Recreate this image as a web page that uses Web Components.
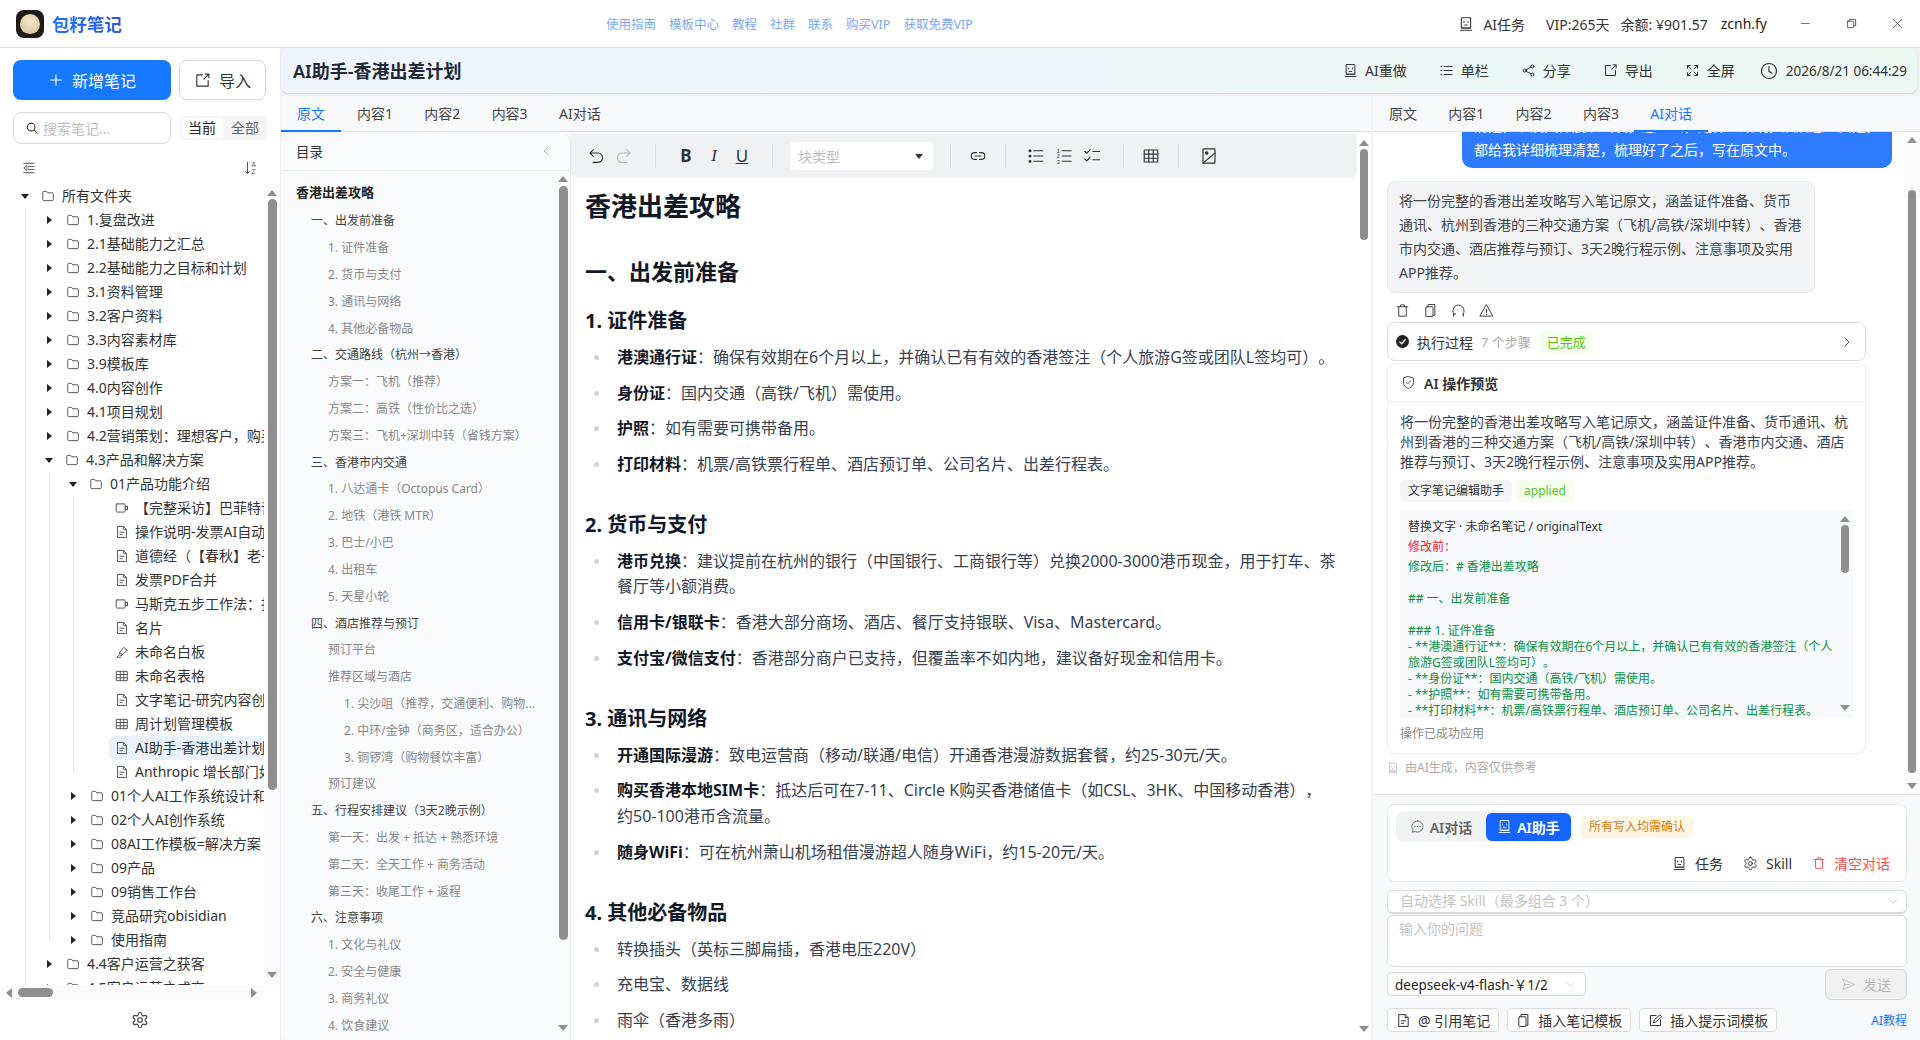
<!DOCTYPE html>
<html lang="zh-CN">
<head>
<meta charset="utf-8">
<title>包籽笔记</title>
<style>
  html, body { margin: 0; height: 100%; overflow: hidden; }
  body {
    font-family: "Noto Sans", "Noto Sans CJK SC", sans-serif;
    font-size: 14px;
    color: #1f2937;
    background: #f0f2f5;
    text-spacing-trim: space-all;
    text-autospace: no-autospace;
  }
</style>
</head>
<body>
<app-shell></app-shell>
<script>
const ICONS = {
  plus: '<path d="M12 4v16M4 12h16"/>',
  box: '<path d="M12 4H4v16h16v-8M14 10l7-7M16 3h5v5"/>',
  search: '<circle cx="10.5" cy="10.5" r="6.5"/><path d="M15.5 15.5L21 21"/>',
  outdent: '<path d="M3 4h18M11 9.5h10M11 14.5h10M3 20h18M8 8l-5 4 5 4z"/>',
  folder: '<path d="M3 5.5A1.5 1.5 0 0 1 4.5 4h5l2 2.5h8A1.5 1.5 0 0 1 21 8v10.5a1.5 1.5 0 0 1-1.5 1.5h-15A1.5 1.5 0 0 1 3 18.5z"/>',
  video: '<rect x="2" y="5" width="15.5" height="14" rx="1.5"/><path d="M17.5 10.5l4-2v7l-4-2"/>',
  doc: '<path d="M5 2.5h9.5l5 5v14H5zM14.5 2.5v5h5M8.5 12.5h7M8.5 16.5h4"/>',
  pen: '<path d="M8 13l7-9 6 5-8 7zM8 13l-1 3 3 3 3-3M6 18l-3 3h7"/>',
  table: '<rect x="3" y="4" width="18" height="16"/><path d="M3 9.5h18M3 15h18M9 4v16M15 4v16"/>',
  gear: '<path d="M12.22 2h-.44a2 2 0 0 0-2 2v.18a2 2 0 0 1-1 1.73l-.43.25a2 2 0 0 1-2 0l-.15-.08a2 2 0 0 0-2.73.73l-.22.38a2 2 0 0 0 .73 2.73l.15.1a2 2 0 0 1 1 1.72v.51a2 2 0 0 1-1 1.74l-.15.09a2 2 0 0 0-.73 2.73l.22.38a2 2 0 0 0 2.73.73l.15-.08a2 2 0 0 1 2 0l.43.25a2 2 0 0 1 1 1.73V20a2 2 0 0 0 2 2h.44a2 2 0 0 0 2-2v-.18a2 2 0 0 1 1-1.73l.43-.25a2 2 0 0 1 2 0l.15.08a2 2 0 0 0 2.73-.73l.22-.39a2 2 0 0 0-.73-2.73l-.15-.08a2 2 0 0 1-1-1.74v-.5a2 2 0 0 1 1-1.74l.15-.09a2 2 0 0 0 .73-2.73l-.22-.38a2 2 0 0 0-2.73-.73l-.15.08a2 2 0 0 1-2 0l-.43-.25a2 2 0 0 1-1-1.73V4a2 2 0 0 0-2-2z"/><circle cx="12" cy="12" r="3"/>',
  robot: '<rect x="5" y="2.5" width="14" height="15.5" rx="1"/><path d="M9 8v1.5M15 8v1.5M10 13.5h4M3.5 21.5h17" /><path d="M5 18h14" />',
  list: '<path d="M8 5.5h13M8 12h13M8 18.5h13M3 5.5h1.5M3 12h1.5M3 18.5h1.5"/>',
  share: '<circle cx="6" cy="12" r="2.5"/><circle cx="18" cy="5.5" r="2.5"/><circle cx="18" cy="18.5" r="2.5"/><path d="M8.2 10.8l7.6-4.2M8.2 13.2l7.6 4.2"/>',
  full: '<path d="M4 4l5.5 5.5M4 8.5V4h4.5M20 4l-5.5 5.5M20 8.5V4h-4.5M4 20l5.5-5.5M4 15.5V20h4.5M20 20l-5.5-5.5M20 15.5V20h-4.5"/>',
  clock: '<circle cx="12" cy="12" r="10"/><path d="M12 6v6.5l4 2.5"/>',
  undo: '<path d="M8.5 3.5L4 8l4.5 4.5M4 8h10.5a5.5 5.5 0 0 1 0 12.5H8"/>',
  redo: '<path d="M15.5 3.5L20 8l-4.5 4.5M20 8H9.5a5.5 5.5 0 0 0 0 12.5H16"/>',
  link: '<path d="M10 7.5H7.5a4.5 4.5 0 0 0 0 9H10M14 7.5h2.5a4.5 4.5 0 0 1 0 9H14M8 12h8"/>',
  ul: '<path d="M9 5h12M9 12h12M9 19h12"/><circle cx="4" cy="5" r="1.3" fill="currentColor"/><circle cx="4" cy="12" r="1.3" fill="currentColor"/><circle cx="4" cy="19" r="1.3" fill="currentColor"/>',
  ol: '<path d="M9.5 5h12M9.5 12h12M9.5 19h12"/><g fill="currentColor" stroke="none" font-size="8" font-family="Liberation Sans"><text x="2" y="8">1</text><text x="2" y="15">2</text><text x="2" y="22">3</text></g>',
  task: '<path d="M2.5 6l2.5 2.5L9.5 3.5M2.5 16l2.5 2.5 4.5-5M13 6h9M13 17h9"/>',
  image: '<rect x="4" y="2.5" width="16" height="19" rx="1"/><path d="M4 21.5L20 8"/><circle cx="9" cy="8" r="1.6" fill="currentColor"/>',
  chat: '<path d="M12 3a9 9 0 1 1-4.2 17L3.5 21l1.2-4A9 9 0 0 1 12 3z"/><path d="M8 12h.01M12 12h.01M16 12h.01" stroke-width="2.4"/>',
  shield: '<path d="M12 2.5l8 2.5v7c0 5-3.5 8-8 9.5-4.5-1.5-8-4.5-8-9.5V5z"/><path d="M8.5 11.5l2.5 2.5 4.5-5"/>',
  trash: '<path d="M3.5 6h17M9 6V3h6v3M6 6v15h12V6"/>',
  copy: '<path d="M8 6V2.5h11v17h-3"/><rect x="4.5" y="6" width="11.5" height="15.5" rx="1"/>',
  refresh: '<path d="M5 18A9 9 0 1 1 19 18M4 21v-3.5h3.5M20 21v-3.5"/>',
  warn: '<path d="M12 3l10 18H2z"/><path d="M12 10v5M12 17.5v1"/>',
  send: '<path d="M3 3.5l18.5 8.5L3 20.5 6 12zM6 12h8"/>',
  edit: '<path d="M13 4H4v16h16v-9M9 15l1-4 9-8 3 3-9 8z"/>',
  chevron: '<path d="M5 9l7 7 7-7"/>',
  right: '<path d="M8 4l8 8-8 8"/>',
  left: '<path d="M16 4l-8 8 8 8"/>',
  min: '<path d="M3 12h18"/>',
  restore: '<rect x="3" y="7" width="14" height="14" rx="1"/><path d="M7 7V3h14v14h-4"/>',
  close: '<path d="M3 3l18 18M21 3L3 21"/>'
};

class UiIcon extends HTMLElement {
  connectedCallback() {
    const size = this.getAttribute('size') || 14;
    const stroke = this.getAttribute('stroke') || 1.6;
    this.attachShadow({ mode: 'open' }).innerHTML = `
      <style>
        :host { display: inline-flex; flex: none; width: ${size}px; height: ${size}px; }
        svg { width: 100%; height: 100%; display: block; }
      </style>
      <svg viewBox="0 0 24 24" fill="none" stroke="currentColor" stroke-width="${stroke}"
           stroke-linecap="round" stroke-linejoin="round">${ICONS[this.getAttribute('name')] || ''}</svg>`;
  }
}

// scrollbars are drawn, the panes never really scroll in this shot
class ScrollBar extends HTMLElement {
  connectedCallback() {
    const a = (n, d) => Number(this.getAttribute(n) ?? d);
    const horizontal = this.hasAttribute('horizontal');
    const w = a('size', 16), tw = a('thumb', 9);
    const start = a('start', 0), len = a('len', 40), up = a('arrow', 10);
    this.attachShadow({ mode: 'open' }).innerHTML = `
      <style>
        :host { display: flex; flex: none; box-sizing: border-box;
          flex-direction: ${horizontal ? 'row' : 'column'}; align-items: center;
          ${horizontal ? `height:${w}px;` : `width:${w}px;`} background: ${this.getAttribute('track') || 'transparent'}; }
        .thumb { flex: none; background: #8f8f8f; border-radius: 5px;
          ${horizontal ? `height:${tw}px;width:${len}px;margin-left:${start}px;` : `width:${tw}px;height:${len}px;margin-top:${start}px;`} }
        .a { flex: none; width: 0; height: 0; }
        .up { margin-top: ${up}px; border: 5.5px solid transparent; border-top: 0; border-bottom: 6px solid #8f8f8f; }
        .down { margin-top: auto; margin-bottom: ${a('arrow-end', up)}px; border: 5.5px solid transparent; border-bottom: 0; border-top: 6px solid #8f8f8f; }
        .lf { margin-left: ${up}px; border: 5px solid transparent; border-left: 0; border-right: 6px solid #8f8f8f; }
        .rg { margin-left: auto; margin-right: ${a('arrow-end', up)}px; border: 5px solid transparent; border-right: 0; border-left: 6px solid #8f8f8f; }
      </style>
      <div class="a ${horizontal ? 'lf' : 'up'}"></div><div class="thumb"></div><div class="a ${horizontal ? 'rg' : 'down'}"></div>`;
  }
}

class TopBar extends HTMLElement {
  connectedCallback() {
    const links = ['使用指南', '模板中心', '教程', '社群', '联系', '购买VIP', '获取免费VIP'];
    this.attachShadow({ mode: 'open' }).innerHTML = `
      <style>
        :host { display: flex; align-items: center; height: 47px; background: #fff; border-bottom: 1px solid #dcdee3; font-size: 14px; color: #333; }
        .brand { width: 606px; flex: none; box-sizing: border-box; padding-left: 16px; display: flex; align-items: center; gap: 8px; }
        .logo { width: 28px; height: 28px; border-radius: 8px; background: #1e1c1a; display: flex; align-items: center; justify-content: center; }
        .bun { width: 20px; height: 20px; border-radius: 50% 50% 48% 48%; background: radial-gradient(circle at 50% 40%, #f4e6cc, #d4bd97); }
        .name { font-size: 17.5px; line-height: 24px; font-weight: 700; background: linear-gradient(90deg, #1677ff, #2f54eb); -webkit-background-clip: text; background-clip: text; color: transparent; }
        nav { display: flex; gap: 13px; font-size: 12.5px; color: #7ba7f7; }
        .right { margin-left: auto; display: flex; align-items: center; }
        .task { display: flex; align-items: center; gap: 9px; margin-right: 21px; }
        .vip { margin-right: 11px; }
        .money { margin-right: 13px; }
        .user { margin-right: 15px; color: #222; }
        .win { width: 46px; height: 46px; display: flex; align-items: center; justify-content: center; color: #444; }
      </style>
      <div class="brand"><div class="logo"><div class="bun"></div></div><span class="name">包籽笔记</span></div>
      <nav>${links.map(l => `<span>${l}</span>`).join('')}</nav>
      <div class="right">
        <span class="task"><ui-icon name="robot" size="16"></ui-icon>AI任务</span>
        <span class="vip">VIP:265天</span>
        <span class="money">余额: ¥901.57</span>
        <span class="user">zcnh.fy</span>
        <span class="win"><ui-icon name="min" size="11" stroke="1.6"></ui-icon></span>
        <span class="win"><ui-icon name="restore" size="11" stroke="1.8"></ui-icon></span>
        <span class="win"><ui-icon name="close" size="11" stroke="1.6"></ui-icon></span>
      </div>`;
  }
}

function leaf(type, text, active) { return { type, text, active }; }
function dir(text, children) { return { type: 'folder', text, children }; }

const TREE = [
  dir('所有文件夹', [
    dir('1.复盘改进'), dir('2.1基础能力之汇总'), dir('2.2基础能力之目标和计划'), dir('3.1资料管理'),
    dir('3.2客户资料'), dir('3.3内容素材库'), dir('3.9模板库'), dir('4.0内容创作'), dir('4.1项目规划'),
    dir('4.2营销策划：理想客户，购买旅程'),
    dir('4.3产品和解决方案', [
      dir('01产品功能介绍', [
        leaf('video', '【完整采访】巴菲特谈投资'), leaf('doc', '操作说明-发票AI自动化'),
        leaf('doc', '道德经（【春秋】老子）'), leaf('doc', '发票PDF合并'),
        leaf('video', '马斯克五步工作法：打破'), leaf('doc', '名片'), leaf('pen', '未命名白板'),
        leaf('table', '未命名表格'), leaf('doc', '文字笔记-研究内容创作'), leaf('table', '周计划管理模板'),
        leaf('doc', 'AI助手-香港出差计划', true), leaf('doc', 'Anthropic 增长部门如何')
      ]),
      dir('01个人AI工作系统设计和实现'), dir('02个人AI创作系统'), dir('08AI工作模板=解决方案'),
      dir('09产品'), dir('09销售工作台'), dir('竞品研究obisidian'), dir('使用指南')
    ]),
    dir('4.4客户运营之获客'), dir('4.5客户运营之成交')
  ])
];

class FileTree extends HTMLElement {
  renderNode(n) {
    if (n.type !== 'folder') {
      return `<div class="row file${n.active ? ' active' : ''}"><div class="in">
        <ui-icon name="${n.type}" size="14" stroke="1.5"></ui-icon><span class="t">${n.text}</span></div></div>`;
    }
    const open = !!n.children;
    return `<div class="row">
        <i class="${open ? 'cd' : 'cr'}"></i>
        <ui-icon class="fi" name="folder" size="14" stroke="1.5"></ui-icon><span class="t">${n.text}</span>
      </div>
      ${open ? `<div class="kids">${n.children.map(c => this.renderNode(c)).join('')}</div>` : ''}`;
  }
  connectedCallback() {
    this.attachShadow({ mode: 'open' }).innerHTML = `
      <style>
        :host { display: block; flex: 1; min-width: 0; overflow: hidden; color: #333; }
        .row { display: flex; align-items: center; height: 24px; padding-left: 19px; white-space: nowrap; line-height: 24px; }
        .cr, .cd { flex: none; display: block; box-sizing: content-box; width: 0; height: 0; }
        .cr { margin: 0 8.5px 0 3.5px; border: 4.5px solid transparent; border-right: 0; border-left: 5px solid #222; }
        .cd { margin: 0 6.5px 0 1.5px; border: 4.5px solid transparent; border-bottom: 0; border-top: 5px solid #222; }
        .fi { margin-left: 6px; color: #444; }
        .t { margin-left: 7px; }
        .kids { margin-left: 24px; background: linear-gradient(#e3e5e8, #e3e5e8) 1px 0 / 1px calc(100% - 12px) no-repeat; }
        .file { padding-left: 37px; }
        .in { display: flex; align-items: center; flex: 1; height: 24px; padding-left: 6px; border-radius: 6px 0 0 6px; color: #444; }
        .in .t { margin-left: 6px; color: #333; }
        .active .in { background: #e8f3ff; }
      </style>
      ${TREE.map(n => this.renderNode(n)).join('')}`;
  }
}

class NoteSidebar extends HTMLElement {
  connectedCallback() {
    this.attachShadow({ mode: 'open' }).innerHTML = `
      <style>
        :host { display: flex; flex-direction: column; flex: none; width: 280px; background: #fff; box-sizing: border-box; padding-top: 12px; height: 100%; margin-right: 1px; }
        .actions { display: flex; gap: 8px; padding-left: 13px; }
        .new { width: 158px; height: 40px; border-radius: 8px; background: #1677ff; color: #fff; font-size: 16px; display: flex; align-items: center; justify-content: center; gap: 8px; }
        .imp { width: 87px; height: 40px; box-sizing: border-box; border: 1px solid #d9d9d9; border-radius: 8px; font-size: 16px; color: #333; display: flex; align-items: center; justify-content: center; gap: 8px; }
        .filter { display: flex; align-items: center; gap: 9px; padding: 12px 0 0 13px; }
        .search { width: 158px; height: 32px; box-sizing: border-box; border: 1px solid #d9d9d9; border-radius: 8px; display: flex; align-items: center; gap: 4px; padding-left: 11px; color: #bfbfbf; font-size: 14px; }
        .search ui-icon { color: #333; }
        .seg { display: flex; height: 24px; background: #f5f5f5; border-radius: 4px; width: 87px; box-sizing: border-box; font-size: 14px; line-height: 24px; color: #666; }
        .seg span { flex: 1; text-align: center; }
        .seg .on { background: #fff; color: #222; border-radius: 3px; margin: 2px 0 2px 1px; line-height: 20px; flex: 0 0 42px; }
        .tools { height: 40px; display: flex; align-items: flex-end; justify-content: space-between; box-sizing: border-box; padding: 0 22px 9px 22px; color: #555; }
        .body { flex: 1; min-height: 0; display: flex; }
        .hbar { width: 264px; }
        .foot { height: 40px; display: flex; align-items: center; justify-content: center; color: #444; }
      </style>
      <div class="actions">
        <div class="new"><ui-icon name="plus" size="16" stroke="1.6"></ui-icon>新增笔记</div>
        <div class="imp"><ui-icon name="box" size="17"></ui-icon>导入</div>
      </div>
      <div class="filter">
        <div class="search"><ui-icon name="search" size="14" stroke="1.8"></ui-icon>搜索笔记...</div>
        <div class="seg"><span class="on">当前</span><span>全部</span></div>
      </div>
      <div class="tools">
        <ui-icon name="outdent" size="14"></ui-icon>
        <svg width="14" height="14" viewBox="0 0 14 14" fill="none" stroke="currentColor"><path d="M3.5 1v11.5M1.5 10.5l2 2 2-2"/><text x="7.5" y="6" font-size="6.5" fill="currentColor" stroke="none" font-family="Liberation Sans">A</text><text x="7.5" y="13" font-size="6.5" fill="currentColor" stroke="none" font-family="Liberation Sans">Z</text></svg>
      </div>
      <div class="body">
        <file-tree></file-tree>
        <scroll-bar size="16" thumb="9" arrow="6" start="3" len="591" arrow-end="7" track="#fbfbfb"></scroll-bar>
      </div>
      <scroll-bar class="hbar" horizontal size="15" thumb="9" arrow="6" start="6" len="35" arrow-end="7" track="#fbfbfb"></scroll-bar>
      <div class="foot"><ui-icon name="gear" size="18" stroke="1.6"></ui-icon></div>`;
  }
}

class TitleStrip extends HTMLElement {
  connectedCallback() {
    const btn = (icon, text) => `<span class="b"><ui-icon name="${icon}" size="15"></ui-icon>${text}</span>`;
    this.attachShadow({ mode: 'open' }).innerHTML = `
      <style>
        :host { display: flex; align-items: center; height: 45px; margin: 0 3px 3px 0; box-sizing: border-box; padding: 0 10px 0 12px; border-radius: 8px;
          background: linear-gradient(90deg, #eef5ff, #ecf9f3); box-shadow: 0 1px 2px rgba(0,0,0,.12); color: #333; }
        h1 { margin: 0; font-size: 18px; line-height: 28px; font-weight: 600; color: #1f2937; }
        .right { margin-left: auto; display: flex; align-items: center; gap: 32px; }
        .b { display: flex; align-items: center; gap: 7px; line-height: 20px; }
        .time { margin-left: -7px; gap: 8px; font-size: 13.5px; }
      </style>
      <h1>AI助手-香港出差计划</h1>
      <div class="right">
        ${btn('robot', 'AI重做')}${btn('list', '单栏')}${btn('share', '分享')}${btn('box', '导出')}${btn('full', '全屏')}
        <span class="b time"><ui-icon name="clock" size="18" stroke="1.6"></ui-icon>2026/8/21 06:44:29</span>
      </div>`;
  }
}

class TabStrip extends HTMLElement {
  connectedCallback() {
    const active = Number(this.getAttribute('active'));
    const tabs = ['原文', '内容1', '内容2', '内容3', 'AI对话'];
    this.attachShadow({ mode: 'open' }).innerHTML = `
      <style>
        :host { display: flex; height: 36px; box-sizing: border-box; flex: none; background: #f8f9fb; border-bottom: 1px solid #dfe2e7; color: #444; }
        span { padding: 0 15.3px 0 16px; line-height: 35px; height: 36px; box-sizing: border-box; }
        span:first-child { padding: 0 17px; }
        .on, span.on:first-child { color: #1677ff; border-bottom: 2px solid #1677ff; padding: 0 16px; }
      </style>
      ${tabs.map((t, i) => `<span class="${i === active ? 'on' : ''}">${t}</span>`).join('')}`;
  }
}

const TOC = [
  [0, '香港出差攻略'], [1, '一、出发前准备'], [2, '1. 证件准备'], [2, '2. 货币与支付'], [2, '3. 通讯与网络'], [2, '4. 其他必备物品'],
  [1, '二、交通路线（杭州→香港）'], [2, '方案一：飞机（推荐）'], [2, '方案二：高铁（性价比之选）'], [2, '方案三：飞机+深圳中转（省钱方案）'],
  [1, '三、香港市内交通'], [2, '1. 八达通卡（Octopus Card）'], [2, '2. 地铁（港铁 MTR）'], [2, '3. 巴士/小巴'], [2, '4. 出租车'], [2, '5. 天星小轮'],
  [1, '四、酒店推荐与预订'], [2, '预订平台'], [2, '推荐区域与酒店'], [3, '1. 尖沙咀（推荐，交通便利、购物...'], [3, '2. 中环/金钟（商务区，适合办公）'], [3, '3. 铜锣湾（购物餐饮丰富）'], [2, '预订建议'],
  [1, '五、行程安排建议（3天2晚示例）'], [2, '第一天：出发 + 抵达 + 熟悉环境'], [2, '第二天：全天工作 + 商务活动'], [2, '第三天：收尾工作 + 返程'],
  [1, '六、注意事项'], [2, '1. 文化与礼仪'], [2, '2. 安全与健康'], [2, '3. 商务礼仪'], [2, '4. 饮食建议']
];

class TocPanel extends HTMLElement {
  connectedCallback() {
    this.attachShadow({ mode: 'open' }).innerHTML = `
      <style>
        :host { display: flex; flex-direction: column; flex: none; width: 289px; margin-left: 1px; background: #fafbfd; border-radius: 8px 8px 0 8px; height: 100%; box-sizing: border-box; border-right: 1px solid #e8e9ec; }
        header { flex: none; height: 37px; box-sizing: border-box; display: flex; align-items: center; justify-content: space-between; padding: 0 18px 2px 14px; border-bottom: 1px solid #eceef1; color: #333; font-size: 13.5px; }
        header ui-icon { color: #999; }
        .body { flex: 1; min-height: 0; display: flex; }
        .list { flex: 1; min-width: 0; overflow: hidden; padding-top: 8px; }
        .i { height: 26.82px; line-height: 26.82px; white-space: nowrap; font-size: 12px; }
        .l0 { padding-left: 14px; font-size: 13px; font-weight: 700; color: #222; margin-bottom: 2.5px; }
        .l1 { padding-left: 29px; color: #444; }
        .l2 { padding-left: 46px; color: #888; }
        .l3 { padding-left: 62px; color: #888; }
      </style>
      <header><span>目录</span><ui-icon name="left" size="12" stroke="1.5"></ui-icon></header>
      <div class="body">
        <div class="list">${TOC.map(([l, t]) => `<div class="i l${l}">${t}</div>`).join('')}</div>
        <scroll-bar size="14" thumb="9" arrow="5" start="4" len="754" arrow-end="9"></scroll-bar>
      </div>`;
  }
}

class NoteEditor extends HTMLElement {
  connectedCallback() {
    const tool = (n) => `<span class="t"><ui-icon name="${n}" size="18" stroke="1.5"></ui-icon></span>`;
    this.attachShadow({ mode: 'open' }).innerHTML = `
      <style>
        :host { display: flex; flex: 1; min-width: 0; height: 100%; background: #fff; }
        .col { flex: 1; min-width: 0; display: flex; flex-direction: column; }
        .bar { flex: none; height: 44px; display: flex; align-items: center; padding-left: 11px; background: #f0f1f3; border-radius: 0 0 8px 8px; color: #333; }
        .t { flex: none; width: 28px; display: flex; justify-content: center; align-items: center; font-size: 17px; line-height: 20px; }
        .off { color: #bbb; }
        .s { flex: none; width: 1px; height: 24px; background: #dcdde0; }
        .sel { flex: none; width: 143px; height: 28px; box-sizing: border-box; background: #fff; border-radius: 4px; display: flex; align-items: center; justify-content: space-between; padding: 0 10px 0 8px; color: #bfbfbf; font-size: 14px; }
        .caret { border: 4.5px solid transparent; border-bottom: 0; border-top: 5px solid #333; }
        .doc { flex: 1; overflow: hidden; padding: 0 0 0 14px; color: #374151; font-size: 16px; line-height: 25.6px; }
        h1, h2, h3 { color: #111827; font-weight: 700; margin: 0; }
        h1 { font-size: 26px; line-height: 36px; margin-top: 10px; }
        h2 { font-size: 22px; line-height: 30px; margin-top: 31.5px; }
        h3 { font-size: 20px; line-height: 28px; margin-top: 33.5px; }
        h2 + h3 { margin-top: 21.5px; }
        ul { list-style: none; margin: 0; padding: 0 0 0 32px; }
        li { margin-top: 10px; position: relative; white-space: nowrap; }
        li.wrap { margin-bottom: 1.5px; }
        li::before { content: ""; position: absolute; left: -23px; top: 10px; width: 5px; height: 5px; border-radius: 50%; background: #cfd3d9; }
        b { color: #111827; font-weight: 700; }
      </style>
      <div class="col">
        <div class="bar">
          ${tool('undo')}<span class="t off"><ui-icon name="redo" size="18" stroke="1.5"></ui-icon></span>
          <span class="s" style="margin:0 16px 0 17px"></span>
          <span class="t" style="font-weight:700">B</span><span class="t" style="font-style:italic;font-family:'Liberation Serif',serif">I</span><span class="t" style="text-decoration:underline">U</span>
          <span class="s" style="margin:0 17px 0 16px"></span>
          <div class="sel"><span>块类型</span><i class="caret"></i></div>
          <span class="s" style="margin:0 13px 0 17px"></span>
          ${tool('link')}
          <span class="s" style="margin:0 16px 0 13px"></span>
          ${tool('ul')}${tool('ol')}${tool('task')}
          <span class="s" style="margin:0 13px 0 17px"></span>
          ${tool('table')}
          <span class="s" style="margin:0 16px 0 13px"></span>
          ${tool('image')}
        </div>
        <div class="doc">
          <h1>香港出差攻略</h1>
          <h2>一、出发前准备</h2>
          <h3>1. 证件准备</h3>
          <ul>
            <li><b>港澳通行证</b>：确保有效期在6个月以上，并确认已有有效的香港签注（个人旅游G签或团队L签均可）。</li>
            <li><b>身份证</b>：国内交通（高铁/飞机）需使用。</li>
            <li><b>护照</b>：如有需要可携带备用。</li>
            <li><b>打印材料</b>：机票/高铁票行程单、酒店预订单、公司名片、出差行程表。</li>
          </ul>
          <h3>2. 货币与支付</h3>
          <ul>
            <li class="wrap"><b>港币兑换</b>：建议提前在杭州的银行（中国银行、工商银行等）兑换2000-3000港币现金，用于打车、茶<br>餐厅等小额消费。</li>
            <li><b>信用卡/银联卡</b>：香港大部分商场、酒店、餐厅支持银联、Visa、Mastercard。</li>
            <li><b>支付宝/微信支付</b>：香港部分商户已支持，但覆盖率不如内地，建议备好现金和信用卡。</li>
          </ul>
          <h3>3. 通讯与网络</h3>
          <ul>
            <li><b>开通国际漫游</b>：致电运营商（移动/联通/电信）开通香港漫游数据套餐，约25-30元/天。</li>
            <li class="wrap"><b>购买香港本地SIM卡</b>：抵达后可在7-11、Circle K购买香港储值卡（如CSL、3HK、中国移动香港），<br>约50-100港币含流量。</li>
            <li><b>随身WiFi</b>：可在杭州萧山机场租借漫游超人随身WiFi，约15-20元/天。</li>
          </ul>
          <h3>4. 其他必备物品</h3>
          <ul>
            <li>转换插头（英标三脚扁插，香港电压220V）</li>
            <li>充电宝、数据线</li>
            <li>雨伞（香港多雨）</li>
          </ul>
        </div>
      </div>
      <scroll-bar size="14" thumb="8" arrow="6" start="3" len="91" arrow-end="8"></scroll-bar>`;
  }
}

class NotePane extends HTMLElement {
  connectedCallback() {
    this.attachShadow({ mode: 'open' }).innerHTML = `
      <style>
        :host { display: flex; flex-direction: column; flex: none; width: 1090px; min-height: 0; background: #f8f9fb; }
        .body { flex: 1; min-height: 0; display: flex; margin-top: 2px; }
      </style>
      <tab-strip active="0"></tab-strip>
      <div class="body"><toc-panel></toc-panel><note-editor></note-editor></div>`;
  }
}

const DIFF_LINES = [
  '', '## 一、出发前准备', '', '### 1. 证件准备',
  '- **港澳通行证**：确保有效期在6个月以上，并确认已有有效的香港签注（个人',
  '旅游G签或团队L签均可）。',
  '- **身份证**：国内交通（高铁/飞机）需使用。',
  '- **护照**：如有需要可携带备用。',
  '- **打印材料**：机票/高铁票行程单、酒店预订单、公司名片、出差行程表。'
];

class ChatThread extends HTMLElement {
  connectedCallback() {
    this.attachShadow({ mode: 'open' }).innerHTML = `
      <style>
        :host { display: flex; flex: 1; min-height: 0; background: #fff; border-bottom: 1px solid #e3e5e8; }
        .col { flex: 1; min-width: 0; overflow: hidden; }
        .me { margin: -24px 0 0 89px; width: 430px; box-sizing: border-box; background: #2f7bff; color: #fff; border-radius: 0 0 10px 10px; padding: 6px 12px; line-height: 24px; white-space: nowrap; overflow: hidden; }
        .ai { margin: 13px 0 0 14px; width: 428px; box-sizing: border-box; background: #f3f4f6; border: 1px solid #e9eaed; border-radius: 8px; padding: 7px 11px; line-height: 24px; color: #444; white-space: nowrap; }
        .acts { height: 29px; margin-left: 22px; display: flex; align-items: center; gap: 13px; color: #444; padding-top: 5px; box-sizing: border-box; }
        .steps { margin-left: 14px; width: 479px; height: 39px; box-sizing: border-box; border: 1px solid #dcdee2; border-radius: 8px; display: flex; align-items: center; padding: 0 12px 0 8px; }
        .ok { width: 13px; height: 13px; border-radius: 50%; background: #222; display: flex; align-items: center; justify-content: center; }
        .steps .n { margin-left: 8px; color: #333; }
        .steps .c { margin-left: 8px; color: #aaa; font-size: 13px; }
        .steps .g { margin-left: 8px; background: #f6ffed; color: #52c41a; font-size: 13px; padding: 0 8px; line-height: 22px; border-radius: 4px; }
        .steps ui-icon.r { margin-left: auto; color: #444; }
        .card { margin: 2px 0 0 14px; width: 479px; height: 391px; box-sizing: border-box; border: 1px solid #eceef1; border-radius: 8px; }
        .hd { height: 38px; box-sizing: border-box; border-bottom: 1px solid #eceef1; display: flex; align-items: center; gap: 8px; padding-left: 13px; font-weight: 600; color: #333; }
        .bd { padding: 10px 12px 0 12px; }
        .desc { line-height: 20px; color: #374151; white-space: nowrap; }
        .tags { display: flex; gap: 4px; margin-top: 8px; font-size: 12px; line-height: 22px; }
        .tags span { padding: 0 8px; background: #f5f5f5; border-radius: 4px; color: #333; }
        .tags .g { background: #f6ffed; color: #52c41a; }
        .diff { margin-top: 8px; height: 208px; display: flex; background: #f7f9fc; border-radius: 4px; font-size: 12px; line-height: 16px; overflow: hidden; }
        .txt { flex: 1; min-width: 0; padding: 9px 0 0 8px; color: #0a8f45; }
        .txt div { min-height: 16px; white-space: pre; }
        .meta { color: #333; margin-bottom: 4px; }
        .del { color: #f5222d; margin-bottom: 4px; }
        .done { margin-top: 8px; font-size: 12px; line-height: 16px; color: #888; }
        .note { margin: 6px 0 0 14px; display: flex; align-items: center; gap: 4px; font-size: 12px; line-height: 16px; color: #aaa; }
      </style>
      <div class="col">
        <div class="me">清楚，以及具体航班出发，怎么去，走什么路线，酒店怎么安定，<br>都给我详细梳理清楚，梳理好了之后，写在原文中。</div>
        <div class="ai">将一份完整的香港出差攻略写入笔记原文，涵盖证件准备、货币<br>通讯、杭州到香港的三种交通方案（飞机/高铁/深圳中转）、香港<br>市内交通、酒店推荐与预订、3天2晚行程示例、注意事项及实用<br>APP推荐。</div>
        <div class="acts"><ui-icon name="trash" size="15"></ui-icon><ui-icon name="copy" size="15"></ui-icon><ui-icon name="refresh" size="15"></ui-icon><ui-icon name="warn" size="15"></ui-icon></div>
        <div class="steps">
          <span class="ok"><svg width="9" height="9" viewBox="0 0 24 24" fill="none" stroke="#fff" stroke-width="3.4"><path d="M4 12l6 6 10-12"/></svg></span>
          <span class="n">执行过程</span><span class="c">7 个步骤</span><span class="g">已完成</span>
          <ui-icon class="r" name="right" size="12" stroke="1.8"></ui-icon>
        </div>
        <div class="card">
          <div class="hd"><ui-icon name="shield" size="15" stroke="1.4"></ui-icon>AI 操作预览</div>
          <div class="bd">
            <div class="desc">将一份完整的香港出差攻略写入笔记原文，涵盖证件准备、货币通讯、杭<br>州到香港的三种交通方案（飞机/高铁/深圳中转）、香港市内交通、酒店<br>推荐与预订、3天2晚行程示例、注意事项及实用APP推荐。</div>
            <div class="tags"><span>文字笔记编辑助手</span><span class="g">applied</span></div>
            <div class="diff">
              <div class="txt">
                <div class="meta">替换文字 · 未命名笔记 / originalText</div>
                <div class="del">修改前：</div>
                <div>修改后：# 香港出差攻略</div>
                ${DIFF_LINES.map(l => `<div>${l}</div>`).join('')}
              </div>
              <scroll-bar size="16" thumb="8" arrow="6" start="3" len="48" arrow-end="7"></scroll-bar>
            </div>
            <div class="done">操作已成功应用</div>
          </div>
        </div>
        <div class="note"><ui-icon name="robot" size="12" stroke="1.2"></ui-icon><span style="margin-left:2px">由AI生成，内容仅供参考</span></div>
      </div>
      <scroll-bar size="16" thumb="8" arrow="5" start="47" len="583" arrow-end="5" track="#fcfcfc"></scroll-bar>`;
  }
}

class ChatComposer extends HTMLElement {
  connectedCallback() {
    this.attachShadow({ mode: 'open' }).innerHTML = `
      <style>
        :host { display: block; flex: none; height: 245px; box-sizing: border-box; background: #f8f9fb; padding: 9px 13px 0 14px; }
        .card { height: 78px; box-sizing: border-box; background: #fff; border: 1px solid #e8eaed; border-radius: 8px; padding: 6px 16px 0 8px; }
        .r1 { display: flex; align-items: center; gap: 8px; height: 31px; }
        .seg { display: flex; height: 31px; width: 177px; box-sizing: border-box; background: #f2f3f5; border-radius: 8px; align-items: center; padding: 0 2px; color: #666; font-weight: 600; font-size: 14px; }
        .seg span { display: flex; align-items: center; justify-content: center; gap: 5px; height: 28px; width: 86px; }
        .seg .on { background: #1664ff; color: #fff; border-radius: 6px; margin-left: auto; width: 85px; }
        .warn { background: #fff7e6; color: #d97706; font-size: 12px; line-height: 22px; padding: 0 8px; border-radius: 4px; }
        .r2 { display: flex; justify-content: flex-end; align-items: center; gap: 20px; height: 20px; margin-top: 11px; color: #333; font-size: 14px; }
        .r2 span { display: flex; align-items: center; gap: 8px; }
        .danger { color: #ff4d4f; }
        .skill { margin-top: 8px; height: 24px; box-sizing: border-box; background: #fff; border: 1px solid #d9dbdf; border-bottom-width: 2px; border-radius: 6px; display: flex; align-items: center; justify-content: space-between; padding: 0 7px 2px 12px; line-height: 18px; color: #c4c4c4; }
        .ask { margin-top: 1px; height: 52px; box-sizing: border-box; background: #fff; border: 1px solid #d9dbdf; border-radius: 6px; padding: 3px 11px; color: #c4c4c4; line-height: 20px; }
        .r3 { display: flex; align-items: center; justify-content: space-between; height: 30px; margin-top: 2px; }
        .model { width: 199px; height: 24px; box-sizing: border-box; background: #fff; border: 1px solid #d9dbdf; border-radius: 4px; display: flex; align-items: center; justify-content: space-between; padding: 0 9px 0 7px; color: #222; font-size: 13.5px; }
        .model ui-icon, .skill ui-icon { color: #bbb; }
        .send { width: 82px; height: 31px; box-sizing: border-box; background: #f0f0f0; border: 1px solid #d9d9d9; border-radius: 6px; display: flex; align-items: center; justify-content: center; gap: 7px; color: #bbb; }
        .r4 { display: flex; align-items: center; gap: 8px; margin-top: 9px; }
        .b { display: flex; align-items: center; gap: 7px; height: 24px; box-sizing: border-box; padding: 0 8px; background: #fff; border: 1px solid #d9dbdf; border-radius: 4px; color: #333; white-space: nowrap; }
        .help { margin-left: auto; color: #1677ff; font-size: 12px; }
      </style>
      <div class="card">
        <div class="r1">
          <div class="seg"><span><ui-icon name="chat" size="15" stroke="1.4"></ui-icon>AI对话</span><span class="on"><ui-icon name="robot" size="15" stroke="1.5"></ui-icon>AI助手</span></div>
          <span class="warn">所有写入均需确认</span>
        </div>
        <div class="r2">
          <span><ui-icon name="robot" size="15"></ui-icon>任务</span>
          <span><ui-icon name="gear" size="15" stroke="1.6"></ui-icon>Skill</span>
          <span class="danger"><ui-icon name="trash" size="14"></ui-icon>清空对话</span>
        </div>
      </div>
      <div class="skill"><span>自动选择 Skill（最多组合 3 个）</span><ui-icon name="chevron" size="12" stroke="1.2"></ui-icon></div>
      <div class="ask">输入你的问题</div>
      <div class="r3">
        <div class="model"><span>deepseek-v4-flash-￥1/2</span><ui-icon name="chevron" size="11" stroke="1.2"></ui-icon></div>
        <div class="send"><ui-icon name="send" size="15" stroke="1.3"></ui-icon>发送</div>
      </div>
      <div class="r4">
        <span class="b"><ui-icon name="doc" size="15"></ui-icon>@ 引用笔记</span>
        <span class="b"><ui-icon name="copy" size="15"></ui-icon>插入笔记模板</span>
        <span class="b"><ui-icon name="edit" size="15"></ui-icon>插入提示词模板</span>
        <span class="help">AI教程</span>
      </div>`;
  }
}

class ChatPane extends HTMLElement {
  connectedCallback() {
    this.attachShadow({ mode: 'open' }).innerHTML = `
      <style>
        :host { display: flex; flex-direction: column; flex: 1; min-width: 0; min-height: 0; margin-left: 2px; background: #fff; box-sizing: border-box; }
      </style>
      <tab-strip active="4"></tab-strip>
      <chat-thread></chat-thread>
      <chat-composer></chat-composer>`;
  }
}

class AppShell extends HTMLElement {
  connectedCallback() {
    this.attachShadow({ mode: 'open' }).innerHTML = `
      <style>
        :host { display: flex; flex-direction: column; height: 1040px; width: 1920px; overflow: hidden; }
        .main { flex: 1; min-height: 0; display: flex; }
        .work { flex: 1; min-width: 0; display: flex; flex-direction: column; }
        .panes { flex: 1; min-height: 0; display: flex; }
      </style>
      <top-bar></top-bar>
      <div class="main">
        <note-sidebar></note-sidebar>
        <div class="work">
          <title-strip></title-strip>
          <div class="panes"><note-pane></note-pane><chat-pane></chat-pane></div>
        </div>
      </div>`;
  }
}

customElements.define('ui-icon', UiIcon);
customElements.define('scroll-bar', ScrollBar);
customElements.define('top-bar', TopBar);
customElements.define('file-tree', FileTree);
customElements.define('note-sidebar', NoteSidebar);
customElements.define('title-strip', TitleStrip);
customElements.define('tab-strip', TabStrip);
customElements.define('toc-panel', TocPanel);
customElements.define('note-editor', NoteEditor);
customElements.define('note-pane', NotePane);
customElements.define('chat-thread', ChatThread);
customElements.define('chat-composer', ChatComposer);
customElements.define('chat-pane', ChatPane);
customElements.define('app-shell', AppShell);
</script>
</body>
</html>
